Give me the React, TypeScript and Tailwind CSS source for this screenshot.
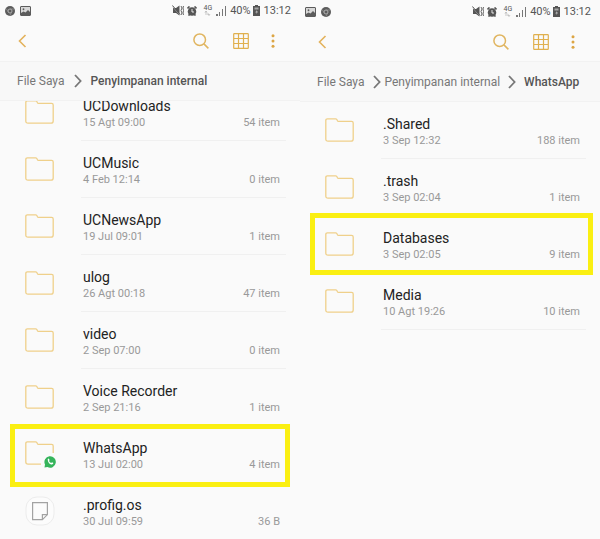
import type { ReactNode } from "react"
import { clsx } from "clsx"

type Entry = {
  name: string
  date: string
  info: string
  icon?: "folder" | "whatsapp" | "file"
  highlight?: string
}

const storageItems: Entry[] = [
  { name: "UCDownloads", date: "15 Agt 09:00", info: "54 item" },
  { name: "UCMusic", date: "4 Feb 12:14", info: "0 item" },
  { name: "UCNewsApp", date: "19 Jul 09:01", info: "1 item" },
  { name: "ulog", date: "26 Agt 00:18", info: "47 item" },
  { name: "video", date: "2 Sep 07:00", info: "0 item" },
  { name: "Voice Recorder", date: "2 Sep 21:16", info: "1 item" },
  {
    name: "WhatsApp",
    date: "13 Jul 02:00",
    info: "4 item",
    icon: "whatsapp",
    highlight: "-top-[2px] -bottom-[4px] left-[10px] right-[10px]",
  },
  { name: ".profig.os", date: "30 Jul 09:59", info: "36 B", icon: "file" },
]

const whatsappItems: Entry[] = [
  { name: ".Shared", date: "3 Sep 12:32", info: "188 item" },
  { name: ".trash", date: "3 Sep 02:04", info: "1 item" },
  {
    name: "Databases",
    date: "3 Sep 02:05",
    info: "9 item",
    highlight: "-top-[3px] -bottom-[2px] left-[10px] right-[7px]",
  },
  { name: "Media", date: "10 Agt 19:26", info: "10 item" },
]

const ChromeIcon = () => (
  <svg className="size-[10px]" viewBox="0 0 20 20">
    <circle cx="10" cy="10" r="10" fill="#5c5c5c" />
    <circle cx="10" cy="10" r="4" fill="none" stroke="#c2c2c2" strokeWidth="1.6" />
    <path d="M10 6h8M6.5 12L2.6 5.4M13.5 12L9.6 19" stroke="#9c9c9c" strokeWidth="1.4" />
  </svg>
)

const PictureIcon = () => (
  <svg className="h-[10px] w-[11px]" viewBox="0 0 22 20">
    <rect x="1" y="1" width="20" height="18" rx="1" fill="#d8d8d8" stroke="#5c5c5c" strokeWidth="2" />
    <circle cx="7" cy="6.5" r="1.8" fill="#5c5c5c" />
    <path d="M2 18v-4l5-3 4 2 5-5 4 4v6z" fill="#5c5c5c" />
  </svg>
)

const MuteIcon = () => (
  <svg className="h-[11px] w-[12px]" viewBox="0 0 24 22">
    <path d="M2 6h6l7-5v20l-7-5H2z" fill="#555" />
    <path d="M1 3l15 17" stroke="#c8c8c8" strokeWidth="1.4" />
    <path d="M1 1l15 18" stroke="#555" strokeWidth="2" />
    <path d="M18 2l2 4-2 5 2 5-2 4M23 2l-1 4 1 5-1 5 1 4" fill="none" stroke="#666" strokeWidth="2" />
  </svg>
)

const AlarmIcon = () => (
  <svg className="size-[10px]" viewBox="0 0 20 20">
    <circle cx="10" cy="11" r="8.5" fill="#555" />
    <path d="M1 5l4-4M19 5l-4-4M3 19l3-3M17 19l-3-3" stroke="#555" strokeWidth="3.4" />
    <path d="M10 6v6h4" fill="none" stroke="#f4f4f4" strokeWidth="1.8" />
  </svg>
)

const NetworkIcon = () => (
  <svg className="h-[5px] w-[7px]" viewBox="0 0 14 10">
    <path d="M4 1v7M8 4v4M4 0L2 3M4 0l2 3M10 9L8 6M10 9l2-3" fill="none" stroke="#a5a5a5" strokeWidth="1.2" />
  </svg>
)

const SignalIcon = () => (
  <svg className="h-[10px] w-[11px]" viewBox="0 0 11 10">
    <path d="M0 8h2v2H0zM3 6h1v4H3zM6 3h1v7H6zM9 0h1v10H9z" fill="#777" />
  </svg>
)

const BatteryIcon = () => (
  <svg className="h-[11px] w-[7px]" viewBox="0 0 14 22">
    <path d="M4 0h6v2h4v20H0V2h4z" fill="#555" />
    <path d="M3 5h8v4H3z" fill="#a8a8a8" />
    <path d="M7.5 10L4.500 15h2.500v3l3-5H7.500z" fill="#bbb" />
  </svg>
)

const BackIcon = () => (
  <svg className="h-[14px] w-[9px]" viewBox="0 0 9 14" fill="none" stroke="#e3b25c" strokeWidth="1.6">
    <path d="M7.500 1L1.500 7l6 6" />
  </svg>
)

const SearchIcon = () => (
  <svg className="size-4" viewBox="0 0 16 16" fill="none" stroke="#e0b560" strokeWidth="1.5">
    <circle cx="6.700" cy="6.700" r="5.800" />
    <path d="M10.900 10.900l4.500 4.500" />
  </svg>
)

const GridIcon = () => (
  <svg className="size-4" viewBox="0 0 16 16" fill="none" stroke="#e0b04e" strokeWidth="1.2">
    <rect x=".7" y=".7" width="14.6" height="14.6" rx=".6" />
    <path d="M5.500 1v14M10.500 1v14M1 5.500h14M1 10.500h14" />
  </svg>
)

const MoreIcon = () => (
  <svg className="h-[14px] w-1" viewBox="0 0 4 14" fill="#dca544">
    <circle cx="2" cy="1.700" r="1.500" />
    <circle cx="2" cy="7" r="1.500" />
    <circle cx="2" cy="12.300" r="1.500" />
  </svg>
)

const CrumbArrow = ({ className }: { className?: string }) => (
  <svg
    className={clsx("h-[14px] w-2 shrink-0", className)}
    viewBox="0 0 8 14"
    fill="none"
    stroke="#777"
    strokeWidth="1.8"
  >
    <path d="M1 1l5.600 6L1 13" />
  </svg>
)

const FolderIcon = () => (
  <svg className="h-6 w-[29px]" viewBox="0 0 29 24" fill="none" stroke="#efd08a" strokeWidth="1.3">
    <path d="M.8 2.400Q.8.8 2.400.8h8.200q.8 0 1.200.7l.7 1.300q.3.5 1 .5h13.100q1.600 0 1.600 1.600v16q0 2.300-2.300 2.300H3.100Q.8 23.200.8 20.900z" />
  </svg>
)

const WhatsAppFolderIcon = () => (
  <svg className="h-[27px] w-[31px]" viewBox="0 0 31 27" fill="none">
    <path
      d="M16 23.200H3.100Q.8 23.200.8 20.900V2.400Q.8.8 2.400.8h8.200q.8 0 1.200.7l.7 1.300q.3.5 1 .5h13.100q1.600 0 1.600 1.600V12"
      stroke="#efd08a"
      strokeWidth="1.3"
    />
    <path d="M19.500 26.500l.5-3a5.700 5.700 0 1 1 2.400 2.500z" fill="#35b45b" />
    <path
      d="M22.700 18.200q.9-1.200 1.400-.2l.5 1.200-.6.8q.7 1.500 2.200 2l.8-.7 1.400.8q-.2 1.600-1.900 1.400-3.600-.9-3.800-5.300z"
      fill="#fff"
    />
  </svg>
)

const FileIcon = () => (
  <svg className="h-[30px] w-[30px]" viewBox="0 0 30 30" fill="none">
    <rect x="1" y="1" width="28" height="28" rx="11" fill="#fcfcfc" stroke="#ececec" />
    <path d="M7.600 6.600h14.800v12l-5 5H7.600z" stroke="#a3a3a3" strokeWidth="1.200" />
    <path d="M22.400 18.600h-5v5" stroke="#a3a3a3" strokeWidth="1.200" />
  </svg>
)

const StatusBar = ({ notifications, className }: { notifications: ReactNode; className: string }) => (
  <div className={clsx("flex items-center pl-[5px] pr-[9px] text-[11px] leading-none text-[#555]", className)}>
    <div className="flex gap-[5px]">{notifications}</div>
    <div className="ml-auto flex items-center">
      <MuteIcon />
      <span className="ml-[3px]">
        <AlarmIcon />
      </span>
      <span className="ml-[6px] flex flex-col items-center text-[7px] leading-[6px]">
        4G
        <NetworkIcon />
      </span>
      <span className="ml-1">
        <SignalIcon />
      </span>
      <span className="ml-[3px]">40%</span>
      <span className="ml-[2px]">
        <BatteryIcon />
      </span>
      <span className="ml-1">13:12</span>
    </div>
  </div>
)

const Toolbar = ({ className }: { className: string }) => (
  <div className={clsx("flex items-center pl-[18px] pr-[25px]", className)}>
    <button type="button" aria-label="Kembali">
      <BackIcon />
    </button>
    <button type="button" aria-label="Cari" className="ml-auto">
      <SearchIcon />
    </button>
    <button type="button" aria-label="Tampilan" className="ml-6">
      <GridIcon />
    </button>
    <button type="button" aria-label="Opsi lainnya" className="ml-[22px]">
      <MoreIcon />
    </button>
  </div>
)

const EntryIcon = ({ icon }: { icon: Entry["icon"] }) => {
  if (icon === "whatsapp") return <WhatsAppFolderIcon />
  if (icon === "file") return <FileIcon />
  return <FolderIcon />
}

const FileList = ({ items, className }: { items: Entry[]; className?: string }) => (
  <ul className={className}>
    {items.map((item) => (
      <li key={item.name} className="relative">
        <button type="button" className="flex h-[57px] w-full text-left">
          <span className="flex h-14 w-[81px] shrink-0 items-center pl-[25px]">
            <EntryIcon icon={item.icon} />
          </span>
          <span className="mr-[14px] flex h-full flex-1 flex-col border-b border-[#f0f0f0] pl-[2px] pr-[6px] pt-3">
            <span className="text-[14px] leading-5 text-[#222]">{item.name}</span>
            <span className="flex justify-between text-[11px] leading-[14px] text-[#999]">
              <span>{item.date}</span>
              <span>{item.info}</span>
            </span>
          </span>
        </button>
        {item.highlight && (
          <div className={clsx("pointer-events-none absolute z-10 border-[5px] border-[#faef12]", item.highlight)} />
        )}
      </li>
    ))}
  </ul>
)

const crumbBar =
  "relative z-10 flex shrink-0 items-center whitespace-nowrap border-y border-[#f2f2f2] bg-[#f8f8f8] pl-[17px] text-[12px] text-[#777]"

export default function App() {
  return (
    <main className="grid h-screen grid-cols-2 overflow-hidden bg-[#fafafa] font-['Roboto',sans-serif]">
      <section className="flex min-w-0 flex-col overflow-hidden">
        <StatusBar
          className="h-[21px] shrink-0"
          notifications={
            <>
              <ChromeIcon />
              <PictureIcon />
            </>
          }
        />
        <Toolbar className="h-10 shrink-0" />
        <nav className={clsx(crumbBar, "h-10")}>
          <a href="#file-saya">File Saya</a>
          <CrumbArrow className="mx-[9px]" />
          <a href="#internal" aria-current="page" className="font-medium text-[#555]">
            Penyimpanan internal
          </a>
        </nav>
        {/* scrolled a little, so the first row sits partly under the path bar */}
        <div className="min-h-0 flex-1">
          <FileList items={storageItems} className="-mt-[17px]" />
        </div>
      </section>

      <section className="flex min-w-0 flex-col overflow-hidden">
        <StatusBar
          className="h-[23px] shrink-0"
          notifications={
            <>
              <PictureIcon />
              <ChromeIcon />
            </>
          }
        />
        <Toolbar className="h-[38px] shrink-0" />
        <nav className={clsx(crumbBar, "h-[41px]")}>
          <a href="#file-saya">File Saya</a>
          <CrumbArrow className="ml-2 mr-1" />
          <a href="#internal">Penyimpanan internal</a>
          <CrumbArrow className="ml-2 mr-2" />
          <a href="#whatsapp" aria-current="page" className="font-medium text-[#555]">
            WhatsApp
          </a>
        </nav>
        <FileList items={whatsappItems} />
      </section>
    </main>
  )
}
